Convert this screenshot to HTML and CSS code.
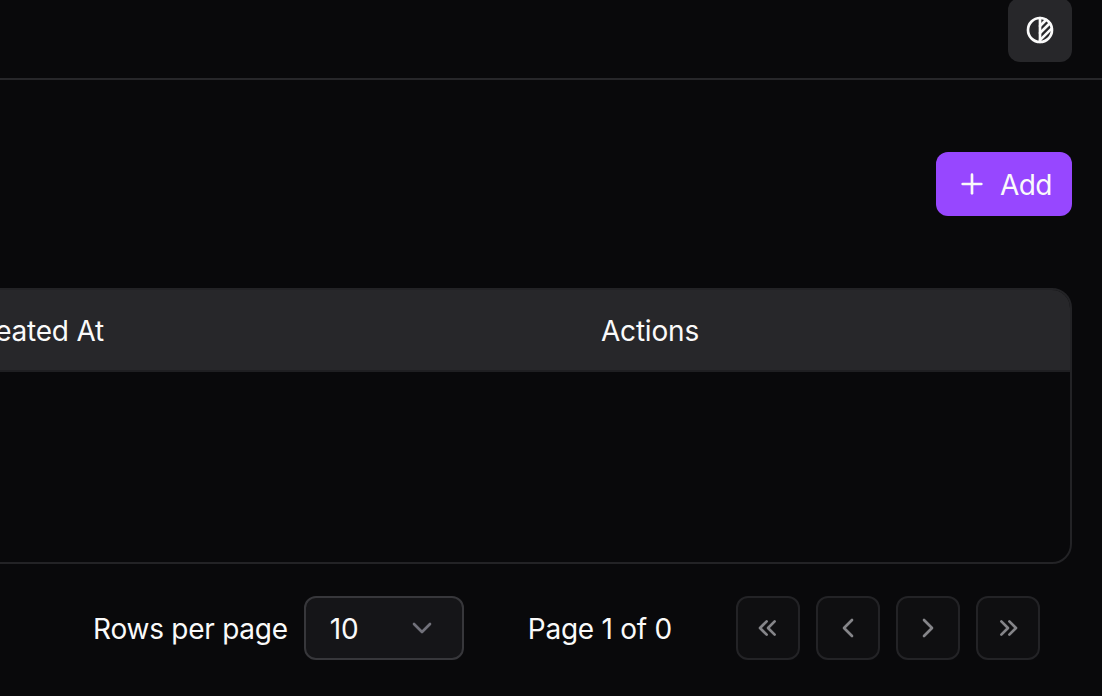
FILE: index.html
```html
<!DOCTYPE html>
<html lang="en">
<head>
<meta charset="UTF-8" />
<meta name="viewport" content="width=device-width, initial-scale=1" />
<title>Table</title>
<link rel="stylesheet" href="styles.css">
</head>
<body>

  <header class="topbar">
    <button class="theme-btn" aria-label="Toggle theme">
      <svg class="icon" viewBox="0 0 24 24"><path d="M12 12m-9 0a9 9 0 1 0 18 0a9 9 0 1 0 -18 0" /><path d="M12 3l0 18" /><path d="M12 9l4.65 -4.65" /><path d="M12 14.3l7.37 -7.37" /><path d="M12 19.6l8.85 -8.85" /></svg>
    </button>
  </header>

  <main class="content">
    <div class="toolbar">
      <button class="add-btn">
        <svg class="icon" viewBox="0 0 24 24"><path d="M12 5l0 14" /><path d="M5 12l14 0" /></svg>
        <span class="label">Add</span>
      </button>
    </div>

    <div class="table">
      <div class="table-head">
        <div class="cell cell-created">Created At</div>
        <div class="cell">Actions</div>
      </div>
      <div class="table-body"></div>
    </div>

    <div class="pagination">
      <div class="rows-per-page">
        <span class="label">Rows per page</span>
        <div class="select">
          <span class="label">10</span>
          <svg class="icon" viewBox="0 0 24 24"><path d="M6 9l6 6l6 -6" /></svg>
        </div>
      </div>
      <div class="label">Page 1 of 0</div>
      <div class="page-btns">
        <button class="page-btn" aria-label="First page"><svg class="icon" viewBox="0 0 24 24"><path d="M11 7l-5 5l5 5" /><path d="M17 7l-5 5l5 5" /></svg></button>
        <button class="page-btn" aria-label="Previous page"><svg class="icon" viewBox="0 0 24 24"><path d="M15 6l-6 6l6 6" /></svg></button>
        <button class="page-btn" aria-label="Next page"><svg class="icon" viewBox="0 0 24 24"><path d="M9 6l6 6l-6 6" /></svg></button>
        <button class="page-btn" aria-label="Last page"><svg class="icon" viewBox="0 0 24 24"><path d="M7 7l5 5l-5 5" /><path d="M13 7l5 5l-5 5" /></svg></button>
      </div>
    </div>
  </main>

</body>
</html>
```

FILE: styles.css
```css
html, body {
  height: 100%;
}
body {
  margin: 0;
  overflow: hidden;
  background: #09090b;
  color: #fafafa;
  font-family: 'Inter', sans-serif;
  font-size: 28px;
  font-weight: 430;
}
button {
  font: inherit;
  color: inherit;
  border: none;
  padding: 0;
}
.icon {
  display: block;
  width: 32px;
  height: 32px;
  flex: none;
  fill: none;
  stroke: currentColor;
  stroke-width: 2;
  stroke-linecap: round;
  stroke-linejoin: round;
}
.label {
  padding-top: 2px;
}
.topbar {
  box-sizing: border-box;
  height: 80px;
  padding: 0 30px 16px 0;
  display: flex;
  justify-content: flex-end;
  align-items: flex-end;
  border-bottom: 2px solid #27272a;
}
.theme-btn {
  width: 64px;
  height: 64px;
  flex: none;
  display: flex;
  align-items: center;
  justify-content: center;
  border-radius: 12px;
  background: #27272a;
}
.content {
  padding: 72px 30px 0 0;
}
.toolbar {
  display: flex;
  justify-content: flex-end;
}
.add-btn {
  height: 64px;
  padding: 0 20px;
  display: flex;
  align-items: center;
  gap: 12px;
  border-radius: 12px;
  background: #9747ff;
  letter-spacing: -0.5px;
}
.table {
  margin: 72px 0 0 -300px;
  height: 276px;
  box-sizing: border-box;
  border: 2px solid #232326;
  border-radius: 20px;
  overflow: hidden;
  letter-spacing: -0.2px;
}
.table-head {
  height: 80px;
  display: flex;
  align-items: center;
  background: #27272a;
}
.cell {
  padding: 2px 0 0 24px;
}
.cell-created {
  width: 612px;
  margin-left: 239px;
}
.table-body {
  height: 192px;
  border-top: 2px solid #1f1f22;
}
.pagination {
  margin-top: 32px;
  padding-right: 32px;
  display: flex;
  justify-content: flex-end;
  align-items: center;
  gap: 64px;
  letter-spacing: -0.25px;
}
.rows-per-page {
  display: flex;
  align-items: center;
  gap: 16px;
}
.select {
  box-sizing: border-box;
  width: 160px;
  height: 64px;
  padding: 0 24px;
  display: flex;
  align-items: center;
  justify-content: space-between;
  border: 2px solid #37373b;
  border-radius: 12px;
  background: #151518;
}
.select .icon {
  color: #71717a;
}
.page-btns {
  display: flex;
  gap: 16px;
}
.page-btn {
  box-sizing: border-box;
  width: 64px;
  height: 64px;
  display: flex;
  align-items: center;
  justify-content: center;
  border: 2px solid #232326;
  border-radius: 12px;
  background: #0f0f11;
  color: #858589;
}
```
